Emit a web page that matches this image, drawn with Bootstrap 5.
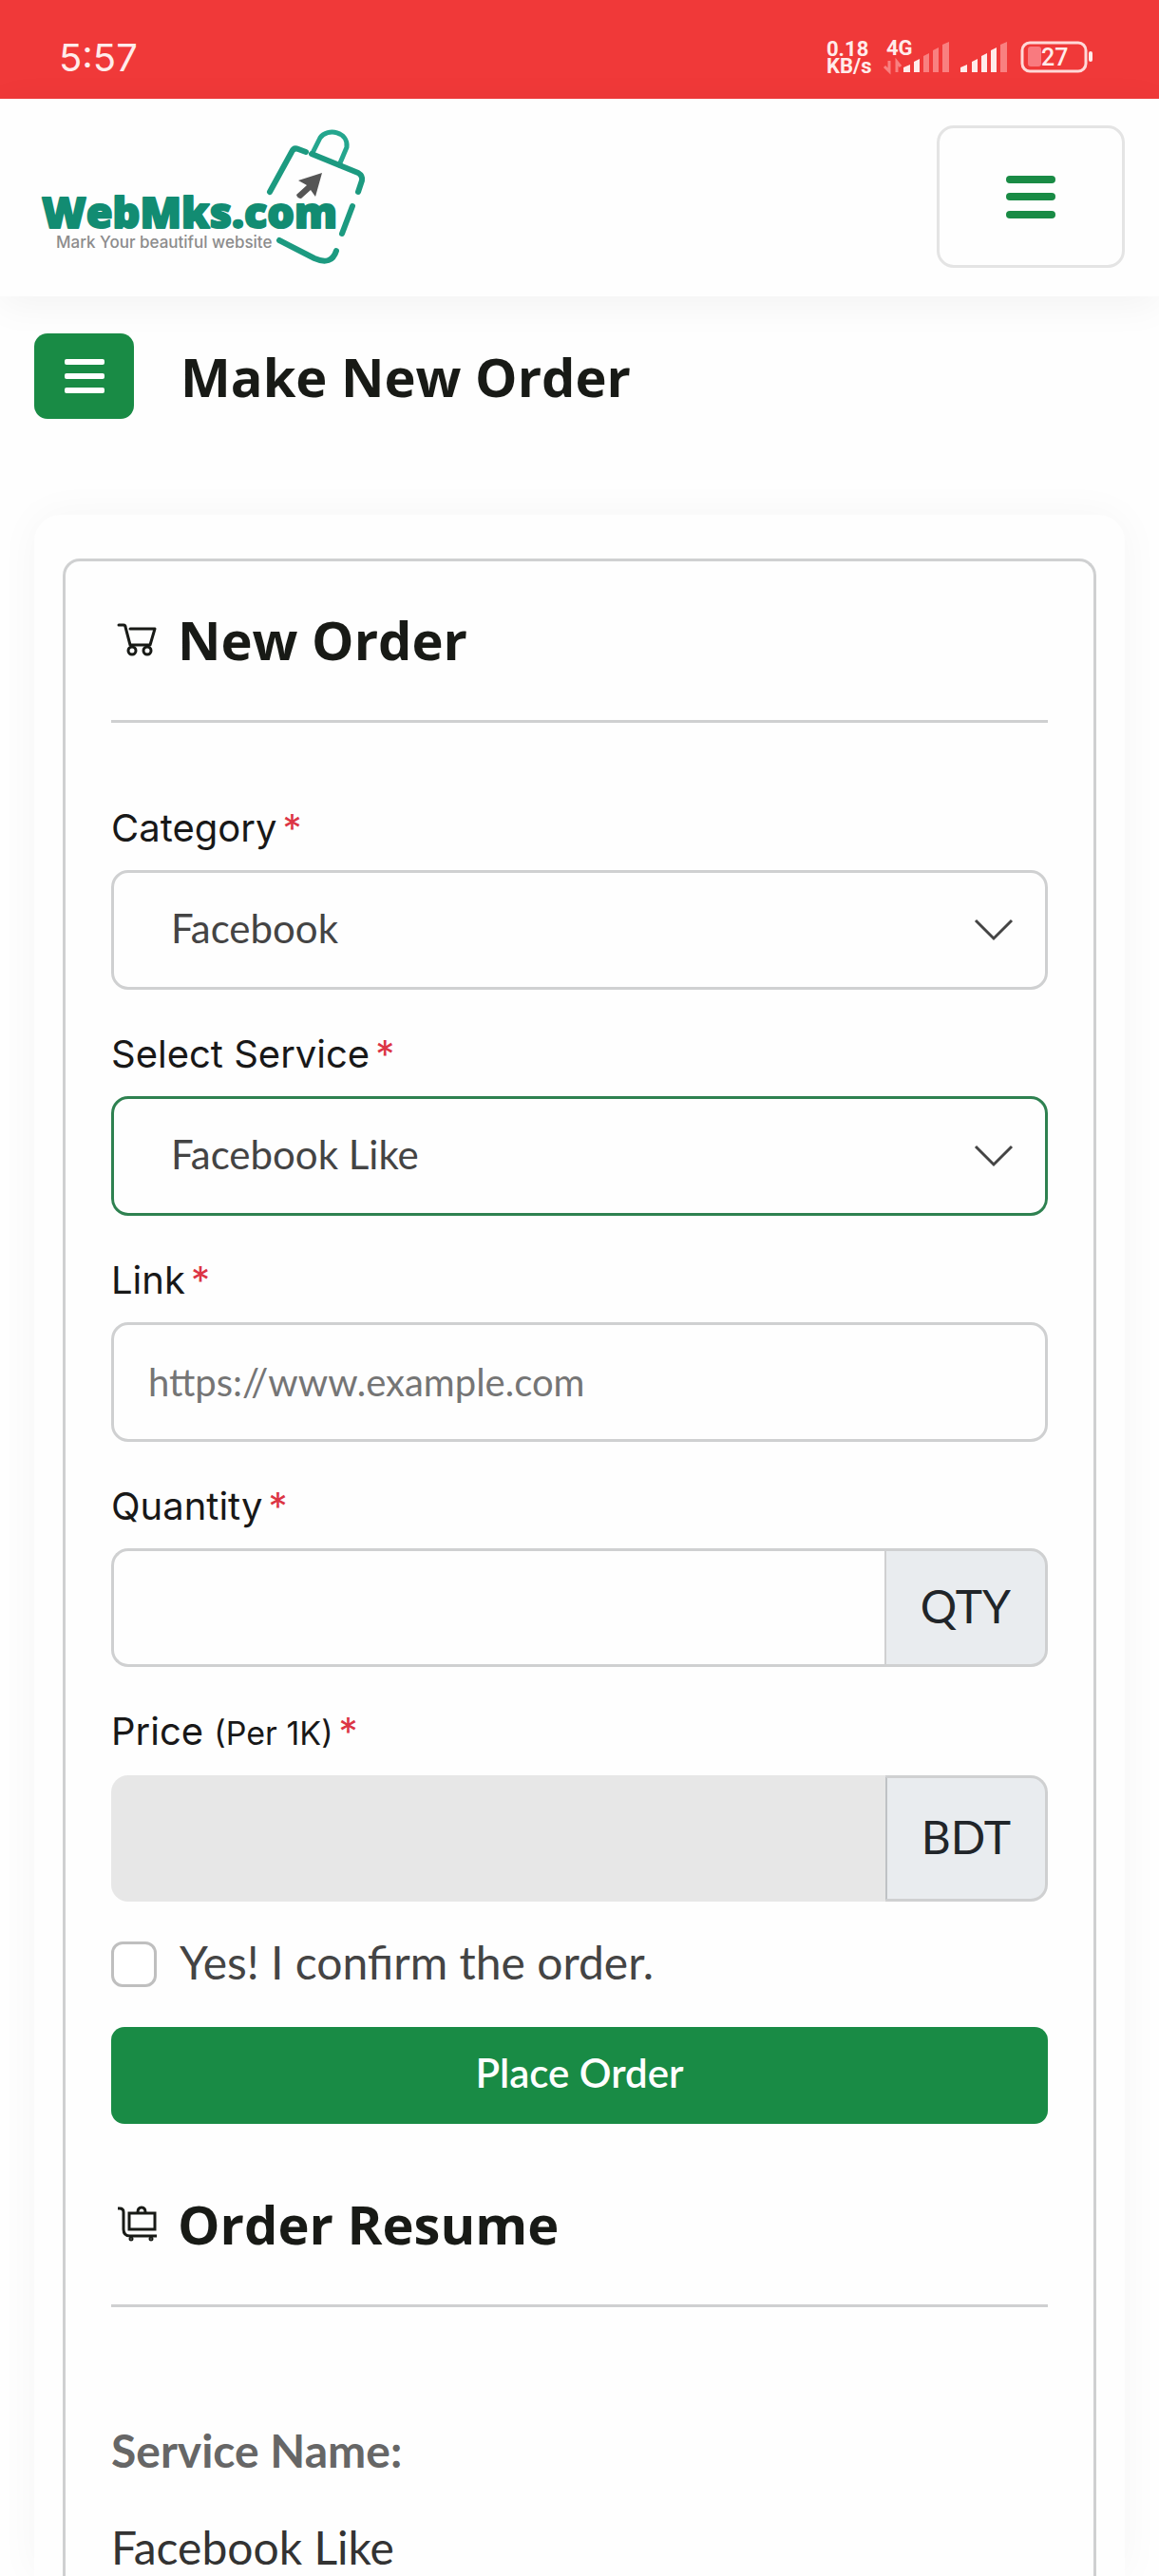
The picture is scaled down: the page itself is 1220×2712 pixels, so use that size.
<!DOCTYPE html>
<html lang="en">
<head>
<meta charset="utf-8">
<meta name="viewport" content="width=device-width, initial-scale=1">
<title>Make New Order - WebMks.com</title>
<link rel="stylesheet" href="https://cdn.jsdelivr.net/npm/bootstrap@5.3.0/dist/css/bootstrap.min.css">
<style>
  :root { --brand: #198b45; --line: #cfd0d1; }
  body { font-family: Lato, "Open Sans", sans-serif; font-size: 48px; line-height: 58px; color: #333; background: #fefefe; }
  h1, h2 { font-family: "Open Sans", sans-serif; font-size: 56px; line-height: 68px; font-weight: 700; color: #181a16; margin: 0; }

  .phone-bar { background: #f03939; height: 104px; padding: 36px 68px 0 62px; color: #ffeceb; }
  .clock { font-family: Inter, sans-serif; font-size: 40px; line-height: 50px; }
  .phone-bar text { fill: #ffeceb; font-family: Roboto, sans-serif; font-weight: 700; font-size: 22px; }
  .phone-bar .level { font-size: 25px; font-weight: 500; }

  .site-nav { background: #fefefe; padding: 28px 36px 30px; box-shadow: 0 8px 40px rgba(0, 0, 0, .05); }
  .site-nav .navbar-brand { padding: 0; margin: 0; }
  .navbar-toggler { width: 198px; height: 150px; border: 3px solid #e4e4e4; border-radius: 18px; padding: 0; color: var(--brand); }
  .logo-name { font: 800 45px "Open Sans", sans-serif; fill: #128c72; stroke: #128c72; stroke-width: 2px; stroke-linejoin: round; }
  .logo-tag { font: 500 17px Inter, sans-serif; fill: #8c8c8c; }

  .page-head { padding: 39px 36px 0; gap: 49px; margin-bottom: 101px; }
  .btn-side { width: 105px; height: 90px; padding: 0; border: 0; border-radius: 14px; background: var(--brand); color: #fff; }

  .panel { margin: 0 36px; padding: 46px 30px 0; border-radius: 28px 28px 0 0; background: #fefefe; box-shadow: 0 0 44px rgba(0, 0, 0, .04); }
  .order-card { border: 3px solid var(--line); border-bottom: 0; border-radius: 18px 18px 0 0; background: #fefefe; padding: 48px 48px 0; }
  .section-title { gap: 20px; margin-bottom: 51px; }
  .order-card hr { border: 0; border-top: 3px solid var(--line); opacity: 1; margin: 0 0 87px; }

  .field { margin-bottom: 44px; }
  .form-label { display: block; font-family: Inter, sans-serif; font-size: 40px; line-height: 48px; font-weight: 400; color: #181818; margin-bottom: 20px; }
  .form-label .unit { font-size: 34px; }
  .form-label .req { color: #dc3545; margin-left: 6px; }
  .form-select, .form-control, .input-group-text { border: 3px solid var(--line); border-radius: 18px; height: 126px; }
  .form-select { font-size: 42px; padding: 0 120px 4px 60px; color: #444; background-color: #fefefe;
    background-image: url("data:image/svg+xml,%3csvg xmlns='http://www.w3.org/2000/svg' viewBox='0 0 42 24'%3e%3cpath d='M2 2l19 19L40 2' fill='none' stroke='%23444' stroke-width='3'/%3e%3c/svg%3e");
    background-size: 42px 24px; background-position: right 33px center; }
  .form-select.picked { border-color: #2e8150; }
  .form-control { font-size: 40px; padding: 0 36px; background: #fefefe; }
  .form-control::placeholder { color: #757575; }
  .input-group-text { font-size: 48px; padding: 0 36px 4px; color: #212529; background: #e9ecef; }
  .input-group .form-control { border-right: 0; }
  .input-group .form-control, .input-group .input-group-text { height: 125px; }
  .price-group .form-control { border: 0; background: #e7e7e7; }
  .price-group .form-control, .price-group .input-group-text { height: 133px; }
  .price-group .input-group-text { border-left-color: #bfc2c5; }

  .confirm { gap: 24px; margin: -2px 0 42px; color: #444; }
  .confirm .form-check-input { width: 48px; height: 48px; margin: 0; border: 3px solid #bfbfbf; border-radius: 12px; }
  .confirm label { line-height: 44px; padding-bottom: 4px; }
  .btn-order { height: 102px; border: 0; border-radius: 14px; background: var(--brand); color: #fff; font-size: 42px; font-weight: 600; padding: 0 0 6px; margin-bottom: 71px; }
  dl.resume { margin: 0; padding-top: 35px; }
  .resume dt { color: #666; margin-bottom: 44px; }
  .resume dd { margin: 0; }
</style>
</head>
<body class="d-flex flex-column min-vh-100">

<div class="phone-bar d-flex justify-content-between align-items-start">
  <span class="clock">5:57</span>
  <svg width="282" height="50" viewBox="870 36 282 50" aria-hidden="true">
    <text x="870" y="59">0.18</text>
    <text x="870" y="77">KB/s</text>
    <text x="933" y="58">4G</text>
    <path d="M936 64v11l-5-5M944 76V65l4 5" fill="none" stroke="#f98080" stroke-width="3"/>
    <g fill="#ffeceb">
      <path d="M951 71l7-3v8h-7zM962 65l6-3v14h-6z"/>
      <path d="M1011 71l7-3v8h-7zM1023 65l6-3v14h-6zM1033 59l6-3v20h-6zM1043 53l6-3v26h-6z"/>
      <rect x="1146" y="54" width="4" height="11" rx="2"/>
    </g>
    <path d="M972 59l6-3v20h-6zM982 53l6-3v26h-6zM992 47l7-3v32h-7zM1053 47l7-3v32h-7z" fill="#f98080"/>
    <rect x="1082" y="49" width="14" height="21" rx="3" fill="#f97a7f"/>
    <rect x="1076" y="45" width="67" height="30" rx="8" fill="none" stroke="#ffd9d8" stroke-width="3"/>
    <text class="level" x="1096" y="69">27</text>
  </svg>
</div>

<nav class="navbar site-nav">
  <a class="navbar-brand" href="#" aria-label="WebMks.com">
    <svg class="d-block" width="354" height="150" viewBox="36 132 354 150">
      <g fill="none" stroke="#1c9a80" stroke-width="6" stroke-linecap="round" stroke-linejoin="round">
        <path d="M329 161L337 145C345 134 367 139 365 155L357 174" stroke="#24a68e" stroke-width="5"/>
        <path d="M328 162L377 182Q382 185 381 190L377 202"/>
        <path d="M284 202L307 160Q309 155 314 157L322 160"/>
        <path d="M371 217L360 246"/>
        <path d="M294 253L331 272Q349 280 354 264"/>
      </g>
      <path d="M339 182L314 190L323 195L312 205Q313 209 317 209L327 200L332 207Z" fill="#555"/>
      <text class="logo-name" x="44" y="240">WebMks.com</text>
      <text class="logo-tag" x="59" y="261">Mark Your beautiful website</text>
    </svg>
  </a>
  <button class="navbar-toggler" type="button" aria-label="Toggle navigation">
    <svg class="d-block mx-auto" width="52" height="45" viewBox="0 0 52 45" fill="currentColor"><rect width="52" height="8" rx="4"/><rect y="18" width="52" height="8" rx="4"/><rect y="37" width="52" height="8" rx="4"/></svg>
  </button>
</nav>

<header class="page-head d-flex align-items-center">
  <button class="btn btn-side d-flex align-items-center justify-content-center" type="button" aria-label="Toggle sidebar">
    <svg width="42" height="36" viewBox="0 0 42 36" fill="currentColor"><rect width="42" height="6" rx="2"/><rect y="15" width="42" height="6" rx="2"/><rect y="30" width="42" height="6" rx="2"/></svg>
  </button>
  <h1>Make New Order</h1>
</header>

<main class="panel flex-grow-1 d-flex flex-column">
  <div class="order-card flex-grow-1">
    <form>
      <div class="section-title d-flex align-items-center">
        <svg width="50" height="44" viewBox="117 653 50 44" fill="none" stroke="#181a16" stroke-width="3" stroke-linecap="round" stroke-linejoin="round">
          <path d="M125 660h5q2 0 2 2l5 19h21l5-17h-26"/><circle cx="139" cy="687" r="4"/><circle cx="155" cy="687" r="4"/>
        </svg>
        <h2>New Order</h2>
      </div>
      <hr>
      <div class="field">
        <label class="form-label" for="category">Category<span class="req">*</span></label>
        <select class="form-select" id="category"><option>Facebook</option></select>
      </div>
      <div class="field">
        <label class="form-label" for="service">Select Service<span class="req">*</span></label>
        <select class="form-select picked" id="service"><option>Facebook Like</option></select>
      </div>
      <div class="field">
        <label class="form-label" for="link">Link<span class="req">*</span></label>
        <input class="form-control" id="link" type="url" placeholder="https://www.example.com">
      </div>
      <div class="field">
        <label class="form-label" for="quantity">Quantity<span class="req">*</span></label>
        <div class="input-group">
          <input class="form-control" id="quantity" type="text" inputmode="numeric">
          <span class="input-group-text">QTY</span>
        </div>
      </div>
      <div class="field">
        <label class="form-label" for="price">Price <span class="unit">(Per 1K)</span><span class="req">*</span></label>
        <div class="input-group price-group">
          <input class="form-control" id="price" type="text" readonly>
          <span class="input-group-text">BDT</span>
        </div>
      </div>
      <div class="confirm d-flex align-items-center">
        <input class="form-check-input" type="checkbox" id="confirm">
        <label for="confirm">Yes! I confirm the order.</label>
      </div>
      <button class="btn btn-order w-100" type="submit">Place Order</button>
    </form>
    <section>
      <div class="section-title d-flex align-items-center">
        <svg width="50" height="44" viewBox="117 2321 50 44" fill="none" stroke="#181a16" stroke-width="3">
          <path d="M124 2327h2q4 0 4 4v18q0 7 7 7h28"/><path d="M136 2332h27v17h-27z"/><path d="M145 2331q0-5 4-5t4 5"/>
          <circle cx="138" cy="2359" r="1"/><circle cx="159" cy="2359" r="1"/>
        </svg>
        <h2>Order Resume</h2>
      </div>
      <hr>
      <dl class="resume">
        <dt>Service Name:</dt>
        <dd>Facebook Like</dd>
      </dl>
    </section>
  </div>
</main>

<script src="https://cdn.jsdelivr.net/npm/bootstrap@5.3.0/dist/js/bootstrap.bundle.min.js"></script>
</body>
</html>
